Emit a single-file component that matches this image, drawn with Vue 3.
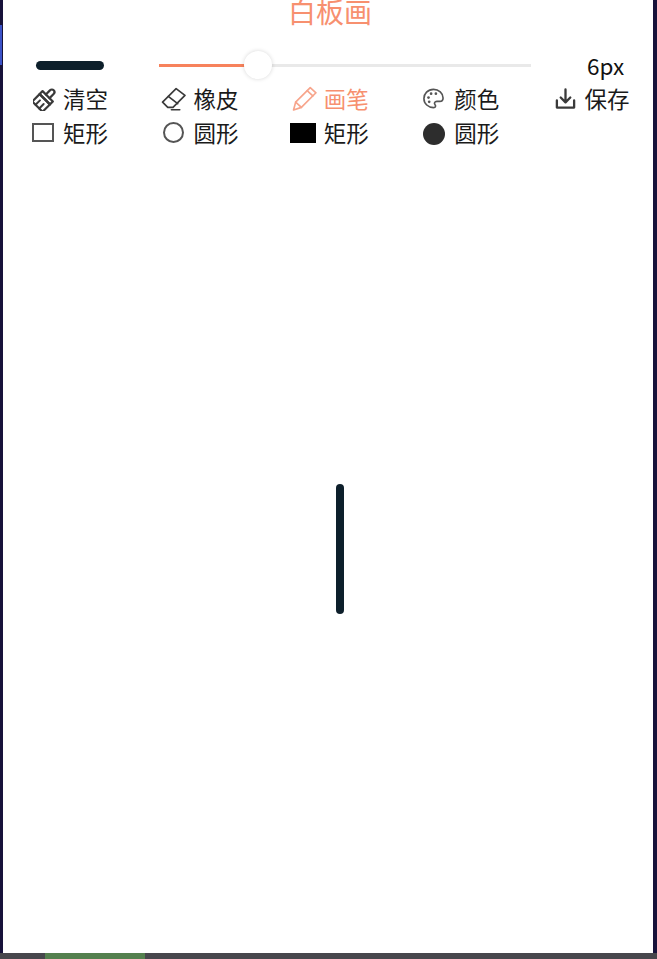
<script setup>
const row1 = [
  { label: '清空', icon: 'brush', big: true },
  { label: '橡皮', icon: 'eraser', big: true },
  { label: '画笔', icon: 'pencil', big: true, active: true },
  { label: '颜色', icon: 'palette' },
  { label: '保存', icon: 'save' },
]
const row2 = [
  { label: '矩形', icon: 'rect' },
  { label: '圆形', icon: 'circle' },
  { label: '矩形', icon: 'rectFill' },
  { label: '圆形', icon: 'circleFill' },
]
</script>

<template>
  <div class="screen">
    <div class="main">
      <div class="edge-left"><span class="edge-blue"></span></div>
      <div class="board">
        <div class="title-wrap"><h1 class="title">白板画</h1></div>
        <div class="size-row">
          <span class="preview"></span>
          <div class="slider">
            <span class="fill"></span>
            <span class="track"></span>
            <span class="thumb"></span>
          </div>
          <span class="size-label">6px</span>
        </div>
        <div class="tools first">
          <div v-for="t in row1" :key="t.icon" class="tool" :class="{ active: t.active }">
            <span class="icon-box">
              <svg class="icon" :class="[t.icon, { big: t.big }]" viewBox="0 0 24 24" fill="none" stroke="currentColor" stroke-width="1.6" stroke-linejoin="round" stroke-linecap="round">
                <template v-if="t.icon === 'brush'">
                  <g transform="rotate(45 12 12)">
                    <path d="M5 13 H19 V23 H5 Z" stroke-width="2.1" />
                    <path d="M9.5 17 V23 M14.5 17 V23" stroke-width="1.9" />
                    <path d="M5 9 H19 V13 H5 Z" stroke-width="2.1" />
                    <path d="M9.5 9 V3.5 C9.5 0 14.5 0 14.5 3.5 V9" stroke-width="2.1" />
                  </g>
                </template>
                <template v-else-if="t.icon === 'eraser'">
                  <path d="M1.5 15.5 L14.5 2.5 L23 9 L11.5 20.5 L6.5 20.5 Z" />
                  <path d="M7 10 L16 17" />
                  <path d="M10 22.8 L18 22.8" />
                </template>
                <template v-else-if="t.icon === 'pencil'">
                  <path d="M1.5 23 L3.5 15.5 L17.5 1.5 L23 6.5 L9 20.5 Z" />
                  <path d="M14.5 4.5 L20 9.5 M3.5 15.5 L9 20.5" />
                </template>
                <template v-else-if="t.icon === 'palette'">
                  <path d="M12 2.5 C6 2.5 2 7 2 12 C2 17.5 6.5 21.5 12 21.5 C14.5 21.5 14.5 19.5 13.5 18.3 C12.5 17 13 15 15.5 15 L18.5 15 C21 15 22 13.5 22 11.5 C22 6.5 17.5 2.5 12 2.5 Z" stroke-width="1.7" />
                  <circle cx="6.8" cy="11" r="1.4" fill="currentColor" stroke="none" />
                  <circle cx="9.5" cy="7" r="1.4" fill="currentColor" stroke="none" />
                  <circle cx="14.5" cy="7" r="1.4" fill="currentColor" stroke="none" />
                  <circle cx="7.5" cy="15.5" r="1.4" fill="currentColor" stroke="none" />
                </template>
                <template v-else>
                  <path d="M12 2.5 L12 15.5 M7 11 L12 16 L17 11" stroke-width="2.4" />
                  <path d="M3 14 L3 21.5 L21 21.5 L21 14" stroke-width="2.4" />
                </template>
              </svg>
            </span>
            <span>{{ t.label }}</span>
          </div>
        </div>
        <div class="tools">
          <div v-for="t in row2" :key="t.icon" class="tool">
            <span class="icon-box"><span class="shape" :class="t.icon"></span></span>
            <span>{{ t.label }}</span>
          </div>
        </div>
        <div class="canvas">
          <span class="stroke"></span>
        </div>
      </div>
      <div class="edge-right"></div>
    </div>
    <div class="taskbar"><span class="task"></span></div>
  </div>
</template>

<style scoped>
.screen {
  width: 657px;
  height: 959px;
  display: flex;
  flex-direction: column;
  overflow: hidden;
  background: #fff;
  font-family: "Noto Sans CJK SC", "Noto Sans", sans-serif;
}
.main {
  flex: 1;
  min-height: 0;
  display: flex;
}
.edge-left {
  width: 3px;
  background: #17123a;
  padding-top: 25px;
}
.edge-blue {
  display: block;
  width: 2px;
  height: 40px;
  background: #3b52c8;
}
.edge-right {
  width: 4px;
  background: #17123a;
}
.board {
  flex: 1;
  min-width: 0;
  display: flex;
  flex-direction: column;
  background: #fff;
}
.title-wrap {
  height: 49px;
  overflow: hidden;
}
.title {
  margin: -9px 0 0;
  padding-left: 4px;
  line-height: 40px;
  text-align: center;
  font-size: 28px;
  font-weight: 400;
  color: #f7906f;
}
.size-row {
  display: flex;
  align-items: center;
  height: 33px;
  padding-left: 33px;
}
.preview {
  width: 68px;
  height: 9px;
  border-radius: 5px;
  background: #0d1f2b;
}
.slider {
  position: relative;
  display: flex;
  align-items: center;
  margin-left: 55px;
  width: 372px;
  height: 3px;
}
.fill {
  width: 86px;
  height: 3px;
  background: #f7825c;
}
.track {
  flex: 1;
  height: 3px;
  background: #e9e9e9;
}
.thumb {
  position: absolute;
  left: 85px;
  top: -13px;
  width: 28px;
  height: 28px;
  border-radius: 50%;
  background: #fff;
  box-shadow: 0 0 4px rgba(0, 0, 0, 0.16);
}
.size-label {
  margin-left: 56px;
  margin-top: -2px;
  font-size: 22.5px;
  line-height: 30px;
  color: #111;
}
.tools {
  display: flex;
  padding-left: 29px;
  height: 34px;
}
.tools.first {
  height: 33px;
}
.tool {
  width: 130.4px;
  flex: none;
  display: flex;
  align-items: center;
  gap: 8px;
  font-size: 22.5px;
  line-height: 33px;
  color: #1a1a1a;
}
.tool.active {
  color: #f7906f;
}
.icon-box {
  flex: none;
  width: 23px;
  height: 23px;
  display: flex;
  align-items: center;
  justify-content: center;
}
.icon {
  flex: none;
  width: 23px;
  height: 23px;
  color: #3a3a3a;
}
.icon.big {
  width: 25px;
  height: 25px;
}
.icon.brush {
  margin-left: 3px;
}
.icon.palette {
  margin-right: 2px;
  color: #555;
}
.active .icon {
  color: #f7a58c;
}
.shape {
  flex: none;
  box-sizing: border-box;
  display: block;
}
.rect {
  width: 22px;
  height: 19px;
  margin-right: 2px;
  border: 2px solid #555;
}
.circle {
  width: 21px;
  height: 21px;
  border: 2px solid #555;
  border-radius: 50%;
}
.rectFill {
  width: 26px;
  height: 20px;
  margin-top: 2px;
  margin-right: 2px;
  background: #000;
}
.circleFill {
  width: 22px;
  height: 22px;
  margin-top: 4px;
  margin-right: 2px;
  background: #2d2d2d;
  border-radius: 50%;
}
.canvas {
  flex: 1;
  position: relative;
}
.stroke {
  position: absolute;
  left: 333px;
  top: 335px;
  width: 8px;
  height: 130px;
  border-radius: 4px;
  background: #0d1f2b;
}
.taskbar {
  height: 6px;
  background: #47474c;
  padding-left: 45px;
}
.task {
  display: block;
  width: 100px;
  height: 6px;
  background: #54804e;
}
</style>

<style>
html, body {
  margin: 0;
  background: #fff;
}
</style>
